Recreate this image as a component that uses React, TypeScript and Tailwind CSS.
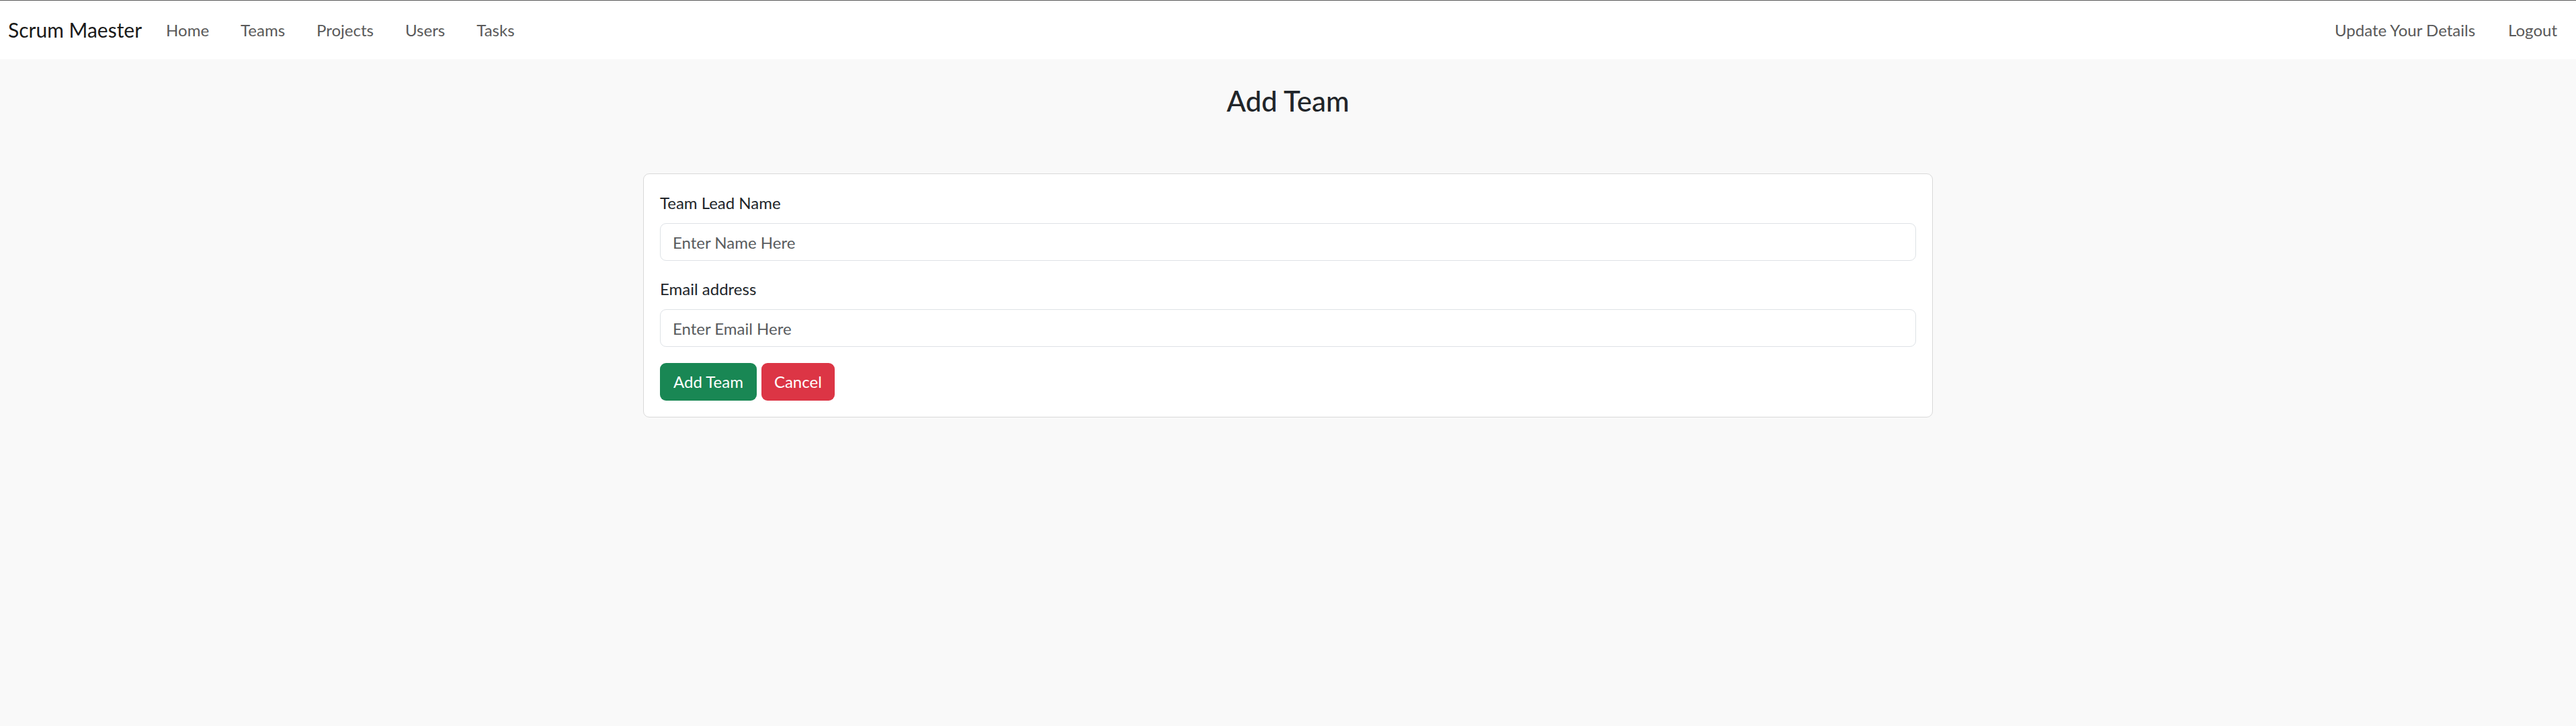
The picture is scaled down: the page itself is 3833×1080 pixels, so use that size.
import React from "react";

const font = { fontFamily: "Lato, 'Open Sans', sans-serif" };

export default function App() {
  return (
    <div className="min-h-[1080px] bg-[#f9f9f9] text-[#212529]" style={font}>
      <nav className="flex h-[88px] items-center justify-between border-t border-[#5a5a5a] bg-white pl-[12px] pr-[28px]">
        <div className="flex items-center">
          <a className="text-[30px] leading-[45px] text-[#1a1a1a]">Scrum Maester</a>
          <ul className="ml-[36px] flex items-center gap-[47px] text-[24px] leading-[36px] text-[#595959]">
            <li>Home</li>
            <li>Teams</li>
            <li>Projects</li>
            <li>Users</li>
            <li>Tasks</li>
          </ul>
        </div>
        <ul className="flex items-center gap-[49px] text-[24px] leading-[36px] text-[#595959]">
          <li>Update Your Details</li>
          <li>Logout</li>
        </ul>
      </nav>

      <h3 className="mt-[37px] text-center text-[42px] font-medium leading-[1.2] text-[#212529]">
        Add Team
      </h3>

      <div className="mx-auto mt-[83px] w-[1919px] rounded-[9px] border border-[#d9d9d9] bg-white p-[24px]">
        <label className="mb-[12px] block pt-[1px] text-[24px] leading-[36px] text-[#212529]">Team Lead Name</label>
        <input
          className="mb-[24px] block h-[56px] w-full rounded-[9px] border border-[#dee2e6] bg-white px-[18px] text-[24px] text-[#212529] placeholder:text-[#595c5f] outline-none"
          placeholder="Enter Name Here"
          style={font}
        />
        <label className="mb-[12px] block text-[24px] leading-[36px] text-[#212529]">Email address</label>
        <input
          className="mb-[24px] block h-[56px] w-full rounded-[9px] border border-[#dee2e6] bg-white px-[18px] text-[24px] text-[#212529] placeholder:text-[#595c5f] outline-none"
          placeholder="Enter Email Here"
          style={font}
        />
        <div className="flex gap-[7px]">
          <button
            className="h-[56px] rounded-[9px] bg-[#198754] px-[20px] text-[24px] leading-[36px] text-white"
            style={font}
          >
            Add Team
          </button>
          <button
            className="h-[56px] rounded-[9px] bg-[#dc3545] px-[19px] text-[24px] leading-[36px] text-white"
            style={font}
          >
            Cancel
          </button>
        </div>
      </div>
    </div>
  );
}
